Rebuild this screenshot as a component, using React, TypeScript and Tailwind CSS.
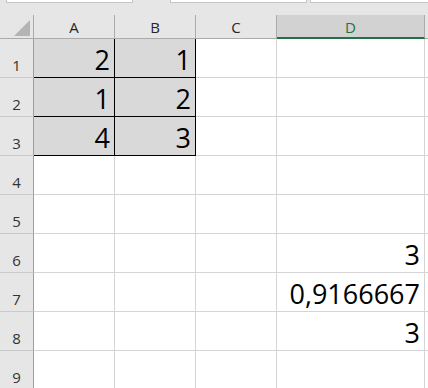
import React from "react";

const font = { fontFamily: '"Open Sans", "Noto Sans", sans-serif' };

type Cell = { v?: string; sel?: boolean };

const rows: Cell[][] = [
  [{ v: "2", sel: true }, { v: "1", sel: true }, {}, {}],
  [{ v: "1", sel: true }, { v: "2", sel: true }, {}, {}],
  [{ v: "4", sel: true }, { v: "3", sel: true }, {}, {}],
  [{}, {}, {}, {}],
  [{}, {}, {}, {}],
  [{}, {}, {}, { v: "3" }],
  [{}, {}, {}, { v: "0,9166667" }],
  [{}, {}, {}, { v: "3" }],
  [{}, {}, {}, {}],
];

const widths = ["w-[81px]", "w-[81px]", "w-[81px]", "w-[148px]"];

export default function App() {
  return (
    <div className="w-[428px] h-[388px] overflow-hidden bg-white" style={font}>
      {/* top strip */}
      <div className="flex h-[15px] bg-[#e6e6e6]">
        <div className="ml-[6px] w-[127px] h-[3px] bg-white border-x border-b border-[#c6c6c6]" />
        <div className="ml-[37px] w-[137px] h-[3px] bg-white border-x border-b border-[#c6c6c6]" />
        <div className="ml-[3px] flex-1 h-[3px] bg-white border-l border-b border-[#c6c6c6]" />
      </div>
      {/* column header */}
      <div className="flex h-[24px] bg-[#e6e6e6]">
        <div className="w-[34px] h-full border-r border-b border-[#ababab] relative">
          <svg className="absolute left-0 top-0" width="33" height="23" viewBox="0 0 33 23">
            <polygon points="14,21 30,21 30,5" fill="#b4b4b4" />
          </svg>
        </div>
        {["A", "B", "C"].map((c) => (
          <div
            key={c}
            className="w-[81px] h-full border-r border-b border-[#ababab] flex items-end justify-center pb-[3px] text-[15px] leading-none text-[#262626]"
          >
            {c}
          </div>
        ))}
        <div className="w-[148px] h-full bg-[#d2d2d2] border-r border-r-[#ababab] border-b-2 border-b-[#217346] flex items-end justify-center pb-[2px] text-[15px] leading-none text-[#217346]">
          D
        </div>
        <div className="flex-1 h-full border-b border-[#ababab]" />
      </div>
      {/* rows */}
      {rows.map((r, i) => (
        <div key={i} className="flex h-[39px]">
          <div className="w-[34px] h-full bg-[#e6e6e6] border-r border-r-[#9e9e9e] border-b border-b-[#cacaca] flex items-end justify-center pb-[4px] text-[15px] leading-none text-[#333333]">
            {i + 1}
          </div>
          {r.map((c, j) => (
            <div
              key={j}
              className={
                widths[j] +
                " h-full border-r border-b flex items-end justify-end pr-[4px] pb-[4px] text-[27px] leading-none text-black " +
                (c.sel ? "bg-[#d9d9d9] border-black" : "bg-white border-[#d4d4d4]")
              }
            >
              {c.v}
            </div>
          ))}
          <div className="flex-1 h-full border-b border-[#d4d4d4]" />
        </div>
      ))}
    </div>
  );
}
